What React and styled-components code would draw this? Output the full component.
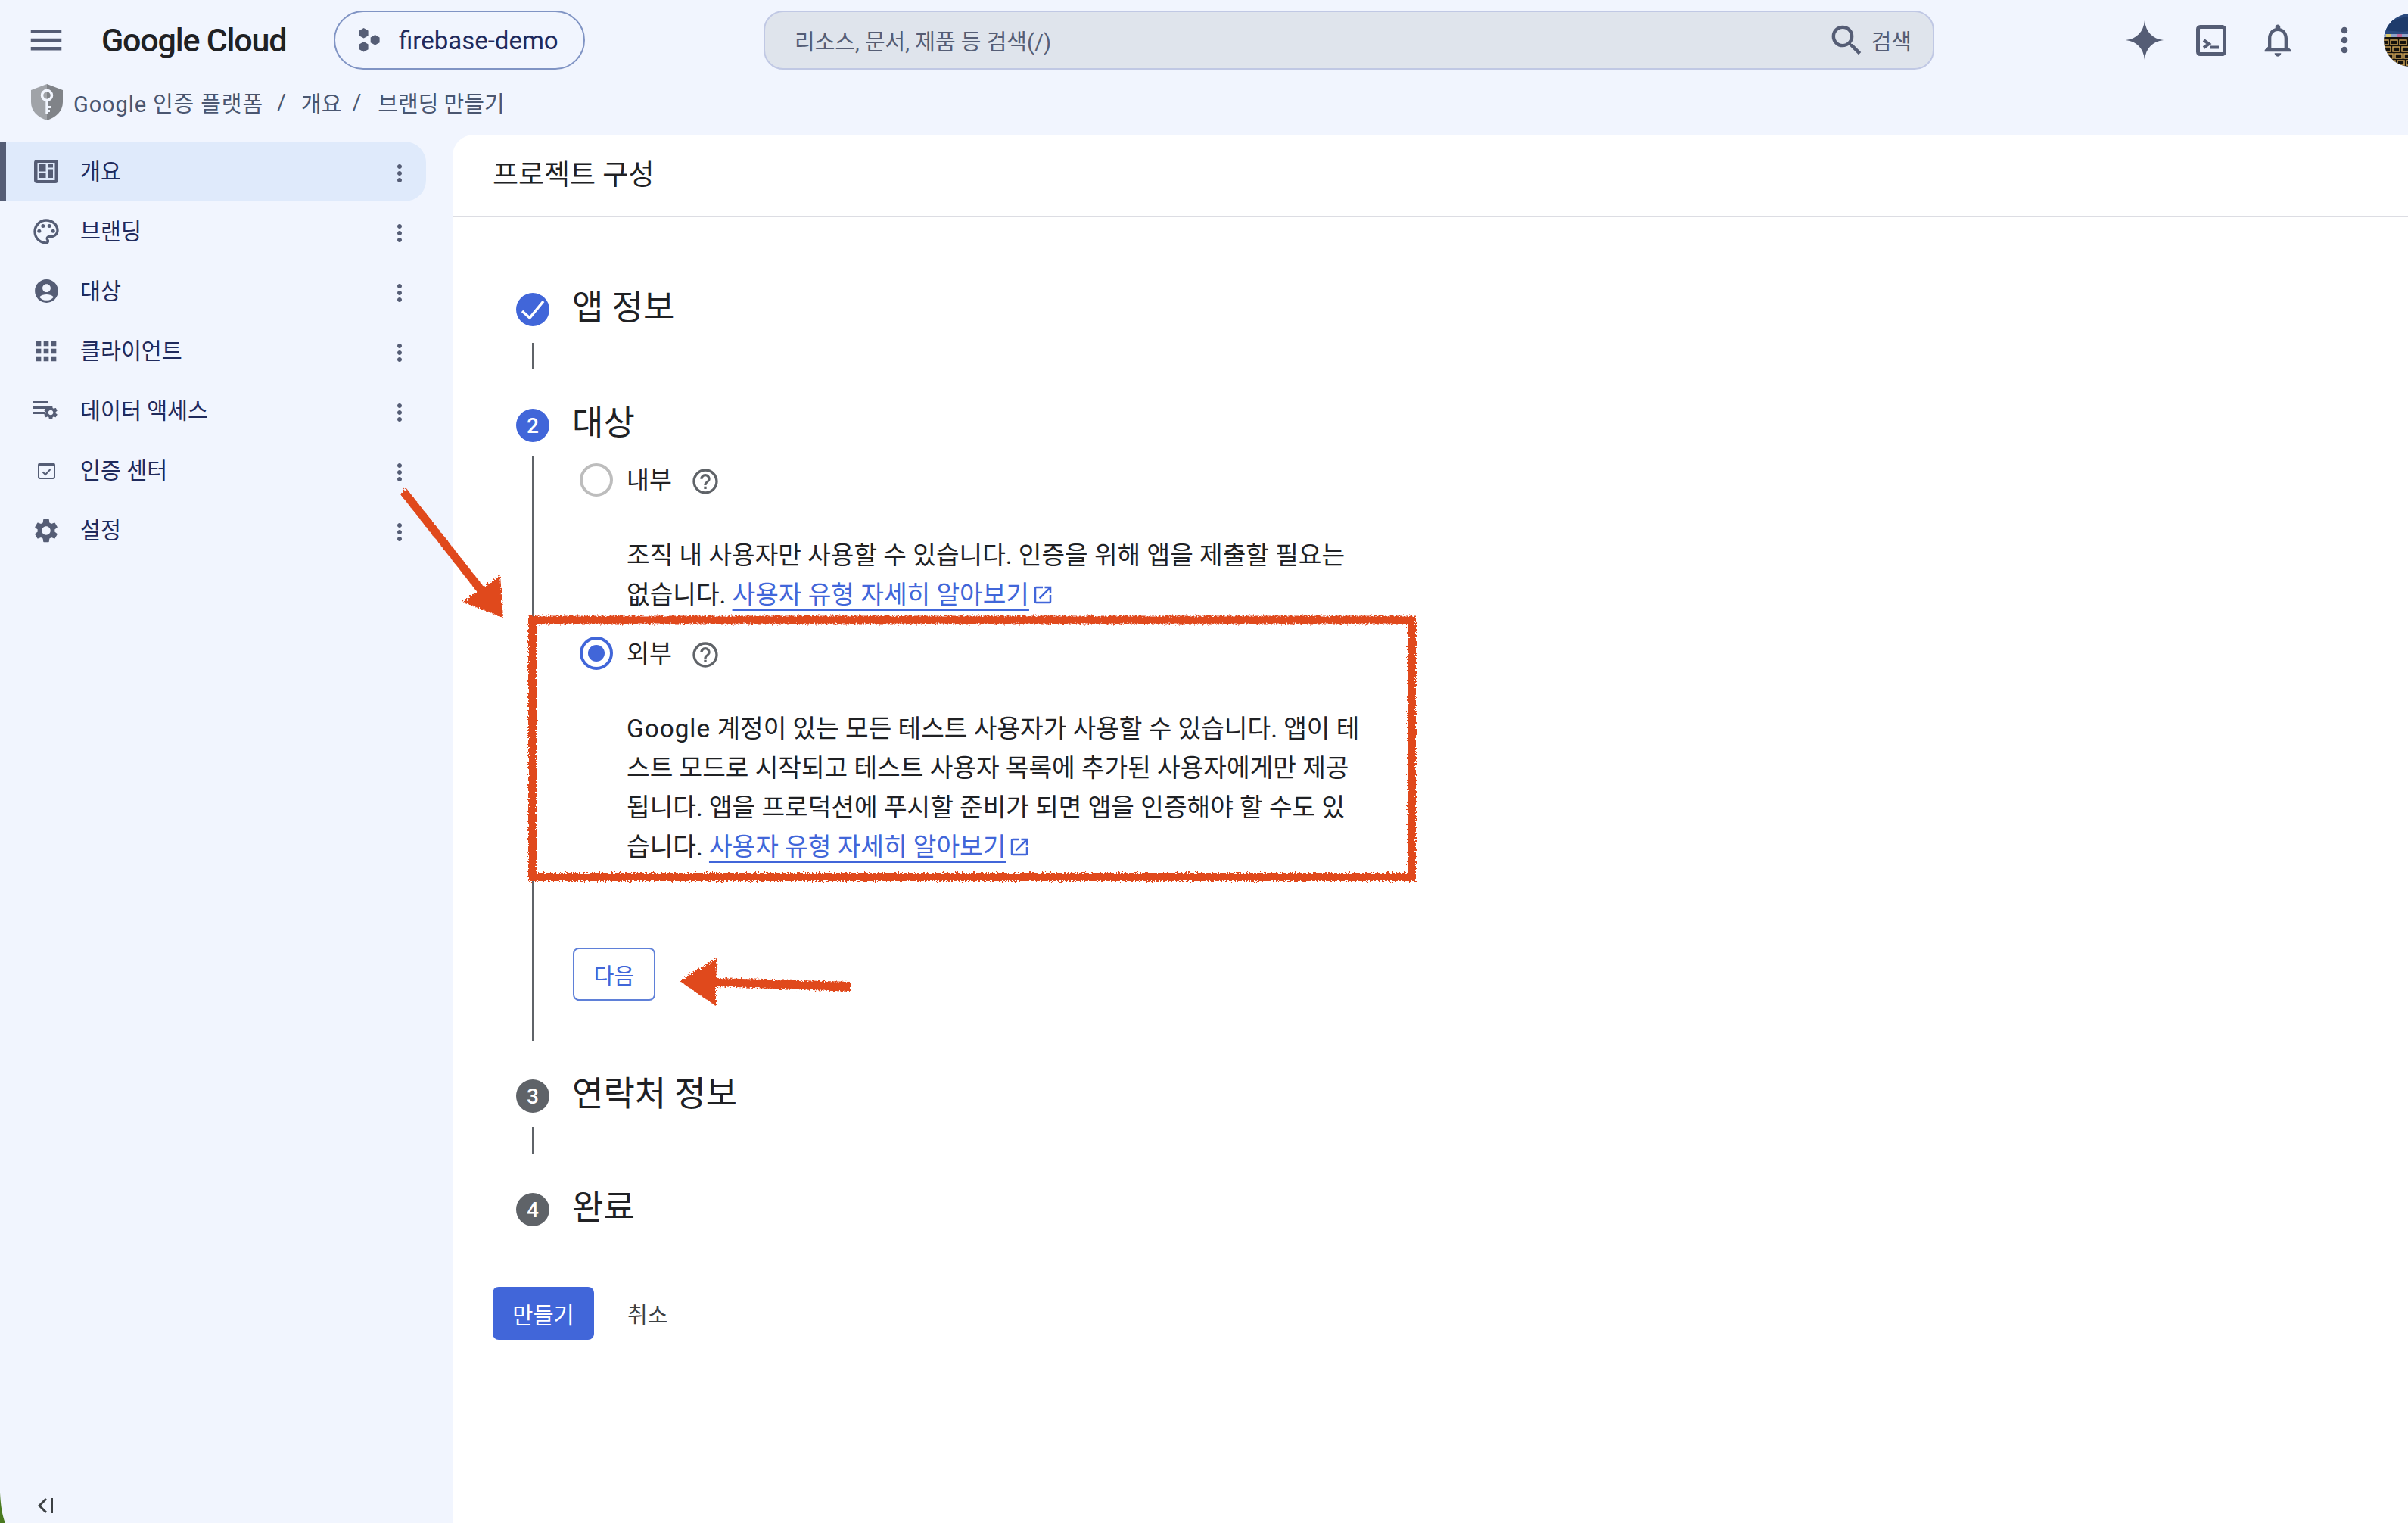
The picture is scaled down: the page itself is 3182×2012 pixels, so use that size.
import React from 'react';
import styled, { createGlobalStyle } from 'styled-components';
import {
  MdMenu,
  MdSearch,
  MdNotificationsNone,
  MdMoreVert,
  MdOutlinePalette,
  MdAccountCircle,
  MdApps,
  MdSettings,
  MdHelpOutline,
  MdOpenInNew,
} from 'react-icons/md';

const GEAR = 'M19.14 12.94c.04-.3.06-.61.06-.94 0-.32-.02-.64-.07-.94l2.03-1.58c.18-.14.23-.41.12-.61l-1.92-3.32c-.12-.22-.37-.29-.59-.22l-2.39.96c-.5-.38-1.03-.7-1.62-.94l-.36-2.54c-.04-.24-.24-.41-.48-.41h-3.84c-.24 0-.43.17-.47.41l-.36 2.54c-.59.24-1.13.57-1.62.94l-2.39-.96c-.22-.08-.47 0-.59.22L2.74 8.87c-.12.21-.08.47.12.61l2.03 1.58c-.05.3-.09.63-.09.94s.02.64.07.94l-2.03 1.58c-.18.14-.23.41-.12.61l1.92 3.32c.12.22.37.29.59.22l2.39-.96c.5.38 1.03.7 1.62.94l.36 2.54c.05.24.24.41.48.41h3.84c.24 0 .44-.17.47-.41l.36-2.54c.59-.24 1.13-.56 1.62-.94l2.39.96c.22.08.47 0 .59-.22l1.92-3.32c.12-.22.07-.47-.12-.61l-2.01-1.58zM12 15.6c-1.98 0-3.6-1.62-3.6-3.6s1.62-3.6 3.6-3.6 3.6 1.62 3.6 3.6-1.62 3.6-3.6 3.6z';

const ICON = '#555d75';
const BLUE = '#4166d9';
const RED = '#e0481e';

const GlobalStyle = createGlobalStyle`
  html, body {
    margin: 0;
    padding: 0;
    overflow: hidden;
    background: #f1f5fe;
  }
  body {
    font-family: Roboto, "Noto Sans CJK KR", sans-serif;
  }
`;

const Page = styled.div`
  position: relative;
  display: flex;
  flex-direction: column;
  width: 3182px;
  height: 2012px;
  overflow: hidden;
  background: #f1f5fe;
`;

const TopBar = styled.header`
  display: flex;
  align-items: center;
  flex-shrink: 0;
  height: 78px;
  padding: 14px 0 0 34px;
`;

const MenuButton = styled.span`
  display: flex;
  flex-shrink: 0;
  color: ${ICON};
`;

const Logo = styled.div`
  flex-shrink: 0;
  width: 307px;
  margin-left: 46px;
  font-size: 43px;
  font-weight: 500;
  letter-spacing: -1.2px;
  color: #202124;
  white-space: nowrap;
`;

const ProjectChip = styled.div`
  display: flex;
  align-items: center;
  flex-shrink: 0;
  gap: 23px;
  box-sizing: border-box;
  width: 332px;
  height: 78px;
  padding-left: 31px;
  border: 2px solid #8094c4;
  border-radius: 39px;
  font-size: 33px;
  color: #1f2a5c;
`;

const SearchBox = styled.div`
  display: flex;
  align-items: center;
  flex-shrink: 0;
  box-sizing: border-box;
  width: 1547px;
  height: 78px;
  margin-left: 236px;
  padding: 0 28px 0 39px;
  border: 2px solid #c0c8e4;
  border-radius: 26px;
  background: #dfe4ec;
`;

const Placeholder = styled.span`
  flex: 1;
  font-size: 29px;
  color: #555d75;
`;

const SearchAction = styled.span`
  display: flex;
  align-items: center;
  gap: 6px;
  font-size: 29px;
  color: #555d75;
`;

const Actions = styled.div`
  display: flex;
  align-items: center;
  flex-shrink: 0;
  margin-left: 234px;
`;

const ActionButton = styled.span`
  display: flex;
  align-items: center;
  justify-content: center;
  width: 88px;
  color: ${ICON};
`;

const AvatarFrame = styled.span`
  display: block;
  flex-shrink: 0;
  width: 70px;
  height: 70px;
  margin-left: 8px;
  border-radius: 50%;
  overflow: hidden;
`;

const Breadcrumb = styled.nav`
  display: flex;
  align-items: center;
  flex-shrink: 0;
  height: 86px;
  padding-left: 41px;
  font-size: 29px;
  color: #4a5670;
`;

const Crumb = styled.span`
  margin-left: ${(p) => p.$gap || 0}px;
  letter-spacing: ${(p) => p.$spacing || 0}px;
`;

const Body = styled.div`
  display: flex;
  flex: 1;
  min-height: 0;
`;

const Sidebar = styled.aside`
  display: flex;
  flex-direction: column;
  flex-shrink: 0;
  box-sizing: border-box;
  width: 598px;
  padding: 9px 35px 0 0;
`;

const NavItem = styled.div`
  display: flex;
  align-items: center;
  box-sizing: border-box;
  height: 79px;
  padding: 0 17px 0 32px;
  border-left: 8px solid ${(p) => (p.$active ? ICON : 'transparent')};
  border-radius: 0 28px 28px 0;
  background: ${(p) => (p.$active ? '#dfeafb' : 'transparent')};
`;

const NavIcon = styled.span`
  display: flex;
  align-items: center;
  justify-content: center;
  flex-shrink: 0;
  width: 42px;
  color: ${ICON};
`;

const NavLabel = styled.span`
  flex: 1;
  margin-left: 24px;
  padding-bottom: 6px;
  font-size: 29.3px;
  color: #1f2a5c;
`;

const NavMenu = styled.span`
  display: flex;
  margin-top: 4px;
  color: ${ICON};
`;

const SidebarFooter = styled.div`
  display: flex;
  margin-top: auto;
  padding: 0 0 13px 50px;
`;

const Panel = styled.main`
  flex: 1;
  min-width: 0;
  border-radius: 28px 0 0 0;
  background: #fff;
`;

const PanelHeader = styled.div`
  display: flex;
  align-items: center;
  box-sizing: border-box;
  height: 109px;
  padding: 0 0 8px 53px;
  border-bottom: 2px solid #dcdde3;
  font-size: 37px;
  color: #202124;
`;

const PanelBody = styled.div`
  padding: 100px 0 0 84px;
`;

const StepHead = styled.div`
  display: flex;
  align-items: center;
  gap: 30px;
  height: 44px;
`;

const StepBadge = styled.span`
  display: flex;
  align-items: center;
  justify-content: center;
  flex-shrink: 0;
  width: 44px;
  height: 44px;
  border-radius: 50%;
  background: ${(p) => (p.$current ? BLUE : '#5f6368')};
  font-size: 28px;
  font-weight: 500;
  color: #fff;
`;

const StepTitle = styled.span`
  padding-bottom: 4px;
  font-size: 45px;
  line-height: 44px;
  color: #202124;
`;

const Connector = styled.div`
  width: 2px;
  height: ${(p) => p.$height}px;
  margin: ${(p) => p.$top}px 0 ${(p) => p.$bottom}px 21px;
  background: #5f6368;
`;

const StepContent = styled.div`
  margin: 19px 0 51px 21px;
  padding: 9px 0 53px 52px;
  border-left: 2px solid #5f6368;
`;

const RadioRow = styled.div`
  display: flex;
  align-items: center;
  height: 44px;
  margin: ${(p) => p.$top || 0}px 0 0 9px;
`;

const Radio = styled.span`
  position: relative;
  flex-shrink: 0;
  box-sizing: border-box;
  width: 44px;
  height: 44px;
  border: 4px solid ${(p) => (p.$checked ? BLUE : '#bdbdbd')};
  border-radius: 50%;

  &::after {
    content: '';
    display: ${(p) => (p.$checked ? 'block' : 'none')};
    width: 22px;
    height: 22px;
    margin: 7px;
    border-radius: 50%;
    background: ${BLUE};
  }
`;

const RadioLabel = styled.span`
  margin-left: 18px;
  padding-top: 2px;
  font-size: 32.5px;
  line-height: 44px;
  color: #202124;
`;

const HelpIcon = styled.span`
  display: flex;
  margin: 4px 0 0 24px;
  color: #5f6368;
`;

const Description = styled.p`
  margin: ${(p) => p.$top}px 0 0 71px;
  font-size: 33.3px;
  line-height: 52px;
  white-space: nowrap;
  color: #202124;
`;

const BrandWord = styled.span`
  letter-spacing: 1px;
`;

const DocLink = styled.a`
  color: ${BLUE};
  text-decoration: underline;
  text-decoration-thickness: 2px;
  text-underline-offset: 8px;
`;

const LinkIcon = styled.span`
  display: inline-flex;
  height: 30px;
  margin: -10px 0 -10px 3px;
  vertical-align: -4px;
  color: ${BLUE};
`;

const NextButton = styled.button`
  display: block;
  box-sizing: border-box;
  width: 109px;
  height: 70px;
  margin-top: 107px;
  padding: 0;
  border: 2px solid #5f80d8;
  border-radius: 8px;
  background: #fff;
  font-family: inherit;
  font-size: 29px;
  color: ${BLUE};
`;

const FormActions = styled.div`
  display: flex;
  align-items: center;
  gap: 44px;
  margin: 80px 0 0 -31px;
`;

const CreateButton = styled.button`
  box-sizing: border-box;
  width: 134px;
  height: 70px;
  padding: 0;
  border: 0;
  border-radius: 8px;
  background: ${BLUE};
  font-family: inherit;
  font-size: 29.5px;
  color: #fff;
`;

const CancelButton = styled.button`
  padding: 0;
  border: 0;
  background: none;
  font-family: inherit;
  font-size: 29px;
  color: #3c4043;
`;

const Overlay = styled.svg`
  position: absolute;
  top: 0;
  left: 0;
  pointer-events: none;
`;

const HiveIcon = () => (
  <svg width="30" height="32" viewBox="0 0 30 32" fill={ICON}>
    <polygon points="9,0 16,4 16,12 9,16 2,12 2,4" transform="translate(-1 0) scale(.85)" />
    <polygon points="9,0 16,4 16,12 9,16 2,12 2,4" transform="translate(-1 18) scale(.85)" />
    <polygon points="9,0 16,4 16,12 9,16 2,12 2,4" transform="translate(14 9) scale(.85)" />
  </svg>
);

const ShieldIcon = () => (
  <svg width="42" height="48" viewBox="0 0 42 48" style={{ display: 'block', flexShrink: 0 }}>
    <path d="M21 0 L0 8 V24 C0 36 9 44 21 48 Z" fill="#a0a3a8" />
    <path d="M21 0 L42 8 V24 C42 36 33 44 21 48 Z" fill="#808388" />
    <circle cx="21" cy="15" r="6.5" fill="none" stroke="#f1f5fe" strokeWidth="3.5" />
    <path d="M19.3 21 H22.7 V39 H19.3 Z M22 29 H26.5 V32 H22 Z M22 34 H25 V37 H22 Z" fill="#f1f5fe" />
  </svg>
);

const SparkIcon = () => (
  <svg width="50" height="52" viewBox="0 0 24 24" preserveAspectRatio="none" fill={ICON}>
    <path d="M12 0 C12.7 7 17 11.3 24 12 C17 12.7 12.7 17 12 24 C11.3 17 7 12.7 0 12 C7 11.3 11.3 7 12 0Z" />
  </svg>
);

const TerminalIcon = () => (
  <svg width="40" height="41" viewBox="0 0 40 41" fill="none" stroke={ICON}>
    <rect x="2.5" y="2.5" width="35" height="36" rx="3" strokeWidth="5" />
    <path d="M10 20 L17 25 L10 30" strokeWidth="4" />
    <path d="M19 29.5 H30" strokeWidth="4" />
  </svg>
);

const Avatar = () => (
  <svg width="70" height="70" viewBox="0 0 70 70" style={{ display: 'block' }}>
    <rect width="70" height="30" fill="#2a4a7e" />
    <path d="M0 12 L30 4 L70 8 V18 L25 24 L0 22 Z" fill="#1e3b6b" />
    <rect y="27" width="70" height="4" fill="#8ea2c8" />
    <rect x="3" y="27" width="6" height="4" fill="#d8c66a" />
    <rect x="18" y="27" width="6" height="4" fill="#c06a9a" />
    <rect y="31" width="70" height="39" fill="#14110c" />
    {[0, 1, 2, 3].map((r) => [0, 1, 2, 3, 4, 5].map((c) => (
      <rect
        key={`${r}-${c}`}
        x={c * 12 + r * 3 - 3}
        y={35 + r * 9}
        width="9"
        height="6"
        fill="none"
        stroke="#c9a056"
        strokeWidth="1.5"
      />
    )))}
  </svg>
);

const DashboardIcon = () => (
  <svg width="32" height="31" viewBox="0 0 32 31">
    <rect width="32" height="31" rx="4" fill={ICON} />
    <rect x="4.5" y="4" width="23" height="23" fill="#dfeafb" />
    <g fill={ICON}>
      <rect x="6.5" y="6" width="9" height="9.5" />
      <rect x="18" y="6" width="7" height="4.5" />
      <rect x="6.5" y="18" width="9" height="6" />
      <rect x="18" y="12.5" width="7" height="11.5" />
    </g>
  </svg>
);

const DataAccessIcon = () => (
  <svg width="34" height="26" viewBox="0 0 34 26" fill={ICON}>
    <rect width="20" height="3" />
    <rect y="7" width="22" height="3" />
    <rect y="14" width="15" height="3" />
    <path d={GEAR} transform="translate(12 4) scale(.92)" />
  </svg>
);

const InboxCheckIcon = () => (
  <svg width="23" height="22" viewBox="0 0 23 22" fill="none" stroke={ICON}>
    <rect x="1" y="1.5" width="21" height="19.5" rx="2" strokeWidth="2" />
    <path d="M1 2.5 H22" strokeWidth="3" />
    <path d="M6.5 12.5 L10 16 L16.5 9" strokeWidth="2" />
  </svg>
);

const CollapseIcon = () => (
  <svg width="20" height="20" viewBox="0 0 20 20" fill="none" stroke="#3c4043" strokeWidth="3">
    <path d="M11 1 L2 10 L11 19" />
    <path d="M18.5 0 V20" />
  </svg>
);

const CheckMark = () => (
  <svg width="44" height="44" viewBox="0 0 44 44" fill="none" stroke="#fff" strokeWidth="3.5">
    <path d="M8 24 L18 33 L36 11" />
  </svg>
);

const Annotations = () => (
  <Overlay width="3182" height="2012" viewBox="0 0 3182 2012">
    <defs>
      <filter id="rough" x="-5%" y="-5%" width="110%" height="110%">
        <feTurbulence type="fractalNoise" baseFrequency="0.45" numOctaves="3" seed="4" />
        <feDisplacementMap in="SourceGraphic" scale="7" />
      </filter>
    </defs>
    <g filter="url(#rough)" fill={RED}>
      <path d="M703.5 819 H1865.5 V1158.5 H703.5 Z" fill="none" stroke={RED} strokeWidth="11" />
      <path d="M533 649 L640 785" fill="none" stroke={RED} strokeWidth="11" />
      <polygon points="665,816 611,795 661,760" />
      <polygon points="898,1296 948,1265 946,1292 1124,1297 1124,1310 946,1303 946,1329" />
    </g>
    <path d="M0 1972 C1 1990 3 2002 7 2012 H0 Z" fill="#4a7a20" />
  </Overlay>
);

const NAV_ITEMS = [
  { label: '개요', icon: <DashboardIcon />, active: true },
  { label: '브랜딩', icon: <MdOutlinePalette size={40} /> },
  { label: '대상', icon: <MdAccountCircle size={37} /> },
  { label: '클라이언트', icon: <MdApps size={40} /> },
  { label: '데이터 액세스', icon: <DataAccessIcon /> },
  { label: '인증 센터', icon: <InboxCheckIcon /> },
  { label: '설정', icon: <MdSettings size={38} /> },
];

const Help = () => (
  <HelpIcon>
    <MdHelpOutline size={40} />
  </HelpIcon>
);

const ExternalLink = () => (
  <LinkIcon>
    <MdOpenInNew size={30} />
  </LinkIcon>
);

const App = () => (
  <Page>
    <GlobalStyle />
    <TopBar>
      <MenuButton>
        <MdMenu size={54} />
      </MenuButton>
      <Logo>Google Cloud</Logo>
      <ProjectChip>
        <HiveIcon />
        firebase-demo
      </ProjectChip>
      <SearchBox>
        <Placeholder>리소스, 문서, 제품 등 검색(/)</Placeholder>
        <SearchAction>
          <MdSearch size={53} color={ICON} />
          검색
        </SearchAction>
      </SearchBox>
      <Actions>
        <ActionButton><SparkIcon /></ActionButton>
        <ActionButton><TerminalIcon /></ActionButton>
        <ActionButton><MdNotificationsNone size={52} /></ActionButton>
        <ActionButton><MdMoreVert size={52} /></ActionButton>
        <AvatarFrame><Avatar /></AvatarFrame>
      </Actions>
    </TopBar>
    <Breadcrumb>
      <ShieldIcon />
      <Crumb $gap={14} $spacing={0.9}>Google 인증 플랫폼</Crumb>
      <Crumb $gap={18}>/</Crumb>
      <Crumb $gap={20}>개요</Crumb>
      <Crumb $gap={14}>/</Crumb>
      <Crumb $gap={22}>브랜딩 만들기</Crumb>
    </Breadcrumb>
    <Body>
      <Sidebar>
        {NAV_ITEMS.map((item) => (
          <NavItem key={item.label} $active={item.active}>
            <NavIcon>{item.icon}</NavIcon>
            <NavLabel>{item.label}</NavLabel>
            <NavMenu><MdMoreVert size={36} /></NavMenu>
          </NavItem>
        ))}
        <SidebarFooter>
          <CollapseIcon />
        </SidebarFooter>
      </Sidebar>
      <Panel>
        <PanelHeader>프로젝트 구성</PanelHeader>
        <PanelBody>
          <StepHead>
            <StepBadge $current><CheckMark /></StepBadge>
            <StepTitle>앱 정보</StepTitle>
          </StepHead>
          <Connector $top={22} $height={35} $bottom={52} />
          <StepHead>
            <StepBadge $current>2</StepBadge>
            <StepTitle>대상</StepTitle>
          </StepHead>
          <StepContent>
            <RadioRow>
              <Radio />
              <RadioLabel>내부</RadioLabel>
              <Help />
            </RadioRow>
            <Description $top={52}>
              조직 내 사용자만 사용할 수 있습니다. 인증을 위해 앱을 제출할 필요는<br />
              없습니다. <DocLink>사용자 유형 자세히 알아보기</DocLink><ExternalLink />
            </Description>
            <RadioRow $top={29}>
              <Radio $checked />
              <RadioLabel>외부</RadioLabel>
              <Help />
            </RadioRow>
            <Description $top={52}>
              <BrandWord>Google</BrandWord> 계정이 있는 모든 테스트 사용자가 사용할 수 있습니다. 앱이 테<br />
              스트 모드로 시작되고 테스트 사용자 목록에 추가된 사용자에게만 제공<br />
              됩니다. 앱을 프로덕션에 푸시할 준비가 되면 앱을 인증해야 할 수도 있<br />
              습니다. <DocLink>사용자 유형 자세히 알아보기</DocLink><ExternalLink />
            </Description>
            <NextButton>다음</NextButton>
          </StepContent>
          <StepHead>
            <StepBadge>3</StepBadge>
            <StepTitle>연락처 정보</StepTitle>
          </StepHead>
          <Connector $top={19} $height={36} $bottom={51} />
          <StepHead>
            <StepBadge>4</StepBadge>
            <StepTitle>완료</StepTitle>
          </StepHead>
          <FormActions>
            <CreateButton>만들기</CreateButton>
            <CancelButton>취소</CancelButton>
          </FormActions>
        </PanelBody>
      </Panel>
    </Body>
    <Annotations />
  </Page>
);

export default App;
